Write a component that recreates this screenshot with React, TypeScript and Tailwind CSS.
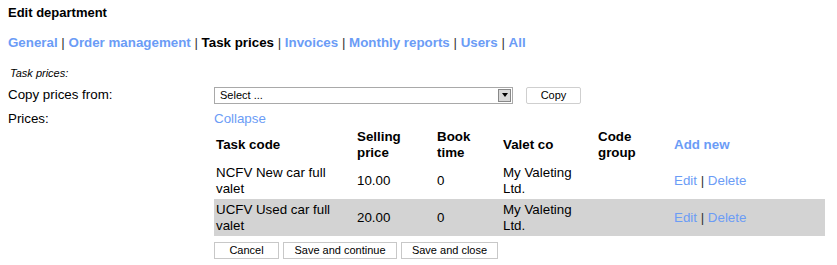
import React from 'react';

const rows = [
  { code: 'NCFV New car full valet', price: '10.00', time: '0', valet: 'My Valeting Ltd.', group: '' },
  { code: 'UCFV Used car full valet', price: '20.00', time: '0', valet: 'My Valeting Ltd.', group: '' },
];

const tabs = ['General', 'Order management', 'Task prices', 'Invoices', 'Monthly reports', 'Users', 'All'];

export default function App() {
  return (
    <div className="min-h-[265px] bg-white pl-2 pt-[5px] text-[13.33px] text-black" style={{ fontFamily: 'Arial, "Liberation Sans", sans-serif' }}>
      <h1 className="text-[13px] font-bold leading-4">Edit department</h1>

      {/* tab links */}
      <div className="mt-[14px] font-bold leading-4">
        {tabs.map((t, i) => (
          <span key={t}>
            {t === 'Task prices' ? (
              <span className="text-black">{t}</span>
            ) : (
              <a className="cursor-pointer text-[#6b9cf6]">{t}</a>
            )}
            {i < tabs.length - 1 && <span className="font-normal text-[#333]"> | </span>}
          </span>
        ))}
      </div>

      <div className="mt-[15px] pl-[2px] text-[11px] italic leading-[14px]">Task prices:</div>

      <div className="mt-[6px] flex h-[18px] items-center">
        <div className="w-[206px]">Copy prices from:</div>
        <div className="flex h-[17px] w-[299px] items-center border border-[#a9a9a9] bg-white">
          <span className="flex-1 pl-[5px] text-[11px]">Select ...</span>
          <span className="mr-px flex h-[13px] w-[13px] items-center justify-center border border-[#888] bg-[#d8d8d8]">
            <span className="h-0 w-0 border-x-[3px] border-t-[4px] border-x-transparent border-t-black" />
          </span>
        </div>
        <button className="ml-[13px] h-[17px] w-[55px] rounded-[2px] border border-[#cfcfcf] bg-white text-[11px] leading-none">Copy</button>
      </div>

      <div className="mt-[7px] flex leading-4">
        <div className="w-[206px]">Prices:</div>
        <div>
          <div className="h-4">
            <a className="cursor-pointer text-[#6b9cf6]">Collapse</a>
          </div>
          <table className="table-fixed border-collapse">
            <colgroup>
              <col className="w-[141px]" />
              <col className="w-[80px]" />
              <col className="w-[66px]" />
              <col className="w-[95px]" />
              <col className="w-[76px]" />
              <col className="w-[153px]" />
            </colgroup>
            <thead>
              <tr className="h-[35px] text-left font-bold">
                <th className="px-[2px]">Task code</th>
                <th className="px-[2px]">Selling price</th>
                <th className="px-[2px]">Book time</th>
                <th className="px-[2px]">Valet co</th>
                <th className="px-[2px]">Code group</th>
                <th className="px-[2px] text-[#6b9cf6]">Add new</th>
              </tr>
            </thead>
            <tbody>
              {rows.map((r, i) => (
                <tr key={r.code} className={`h-[37px] ${i % 2 === 1 ? 'bg-[#d3d3d3]' : ''}`}>
                  <td className="px-[2px]">{r.code}</td>
                  <td className="px-[2px]">{r.price}</td>
                  <td className="px-[2px]">{r.time}</td>
                  <td className="px-[2px]">{r.valet}</td>
                  <td className="px-[2px]">{r.group}</td>
                  <td className="px-[2px]">
                    <a className="cursor-pointer text-[#6b9cf6]">Edit</a>
                    <span className="text-[#333]"> | </span>
                    <a className="cursor-pointer text-[#6b9cf6]">Delete</a>
                  </td>
                </tr>
              ))}
            </tbody>
          </table>
          <div className="mt-[6px] flex gap-[4px] text-[11px]">
            <button className="h-[17px] w-[65px] border border-[#c8c8c8] bg-white leading-none">Cancel</button>
            <button className="h-[17px] w-[114px] border border-[#c8c8c8] bg-white leading-none">Save and continue</button>
            <button className="h-[17px] w-[97px] border border-[#c8c8c8] bg-white leading-none">Save and close</button>
          </div>
        </div>
      </div>
    </div>
  );
}
